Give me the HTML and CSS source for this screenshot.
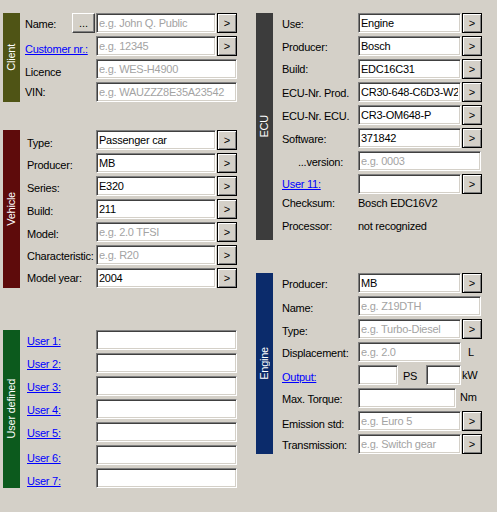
FILE: index.html
```html
<!DOCTYPE html>
<html>
<head>
<meta charset="utf-8">
<link rel="stylesheet" href="styles.css">
</head>
<body>
<div class="page">
  <div class="col col-left">
    <section class="group g-client">
      <div class="bar bar-client"><span>Client</span></div>
      <div class="fields">
        <div class="row">
          <span class="lbl lbl-short t5">Name:</span>
          <button class="dots">...</button>
          <input class="txt w120" placeholder="e.g. John Q. Public">
          <button class="go">&gt;</button>
        </div>
        <div class="row">
          <a href="#" class="lbl lnk t7">Customer nr.:</a>
          <input class="txt w120" placeholder="e.g. 12345">
          <button class="go">&gt;</button>
        </div>
        <div class="row">
          <span class="lbl t7">Licence</span>
          <input class="txt w141" placeholder="e.g. WES-H4900">
        </div>
        <div class="row">
          <span class="lbl t4">VIN:</span>
          <input class="txt w141" placeholder="e.g. WAUZZZ8E35A23542">
        </div>
      </div>
    </section>

    <section class="group g-vehicle">
      <div class="bar bar-vehicle"><span>Vehicle</span></div>
      <div class="fields">
        <div class="row">
          <span class="lbl t7">Type:</span>
          <input class="txt w120" value="Passenger car">
          <button class="go">&gt;</button>
        </div>
        <div class="row">
          <span class="lbl t6">Producer:</span>
          <input class="txt w120" value="MB">
          <button class="go">&gt;</button>
        </div>
        <div class="row">
          <span class="lbl t6">Series:</span>
          <input class="txt w120" value="E320">
          <button class="go">&gt;</button>
        </div>
        <div class="row">
          <span class="lbl t6">Build:</span>
          <input class="txt w120" value="211">
          <button class="go">&gt;</button>
        </div>
        <div class="row">
          <span class="lbl t6">Model:</span>
          <input class="txt w120" placeholder="e.g. 2.0 TFSI">
          <button class="go">&gt;</button>
        </div>
        <div class="row">
          <span class="lbl t5">Characteristic:</span>
          <input class="txt w120" placeholder="e.g. R20">
          <button class="go">&gt;</button>
        </div>
        <div class="row">
          <span class="lbl t4">Model year:</span>
          <input class="txt w120" value="2004">
          <button class="go">&gt;</button>
        </div>
      </div>
    </section>

    <section class="group g-user">
      <div class="bar bar-user"><span>User defined</span></div>
      <div class="fields">
        <div class="row"><a href="#" class="lbl lnk t5">User 1:</a><input class="txt w141"></div>
        <div class="row"><a href="#" class="lbl lnk t5">User 2:</a><input class="txt w141"></div>
        <div class="row"><a href="#" class="lbl lnk t5">User 3:</a><input class="txt w141"></div>
        <div class="row"><a href="#" class="lbl lnk t5">User 4:</a><input class="txt w141"></div>
        <div class="row"><a href="#" class="lbl lnk t5">User 5:</a><input class="txt w141"></div>
        <div class="row"><a href="#" class="lbl lnk t7">User 6:</a><input class="txt w141"></div>
        <div class="row"><a href="#" class="lbl lnk t7">User 7:</a><input class="txt w141"></div>
      </div>
    </section>
  </div>

  <div class="col col-right">
    <section class="group g-ecu">
      <div class="bar bar-ecu"><span>ECU</span></div>
      <div class="fields">
        <div class="row">
          <span class="lbl t5">Use:</span>
          <input class="txt w103" value="Engine">
          <button class="go">&gt;</button>
        </div>
        <div class="row">
          <span class="lbl t5">Producer:</span>
          <input class="txt w103" value="Bosch">
          <button class="go">&gt;</button>
        </div>
        <div class="row">
          <span class="lbl t4">Build:</span>
          <input class="txt w103" value="EDC16C31">
          <button class="go">&gt;</button>
        </div>
        <div class="row">
          <span class="lbl t5">ECU-Nr. Prod.</span>
          <input class="txt w103" value="CR30-648-C6D3-W2">
          <button class="go">&gt;</button>
        </div>
        <div class="row">
          <span class="lbl t5">ECU-Nr. ECU.</span>
          <input class="txt w103" value="CR3-OM648-P">
          <button class="go">&gt;</button>
        </div>
        <div class="row">
          <span class="lbl t5">Software:</span>
          <input class="txt w103" value="371842">
          <button class="go">&gt;</button>
        </div>
        <div class="row">
          <span class="lbl lbl-indent t5">...version:</span>
          <input class="txt w123" placeholder="e.g. 0003">
        </div>
        <div class="row">
          <a href="#" class="lbl lnk t4">User 11:</a>
          <input class="txt w103">
          <button class="go">&gt;</button>
        </div>
        <div class="row info">
          <span class="lbl">Checksum:</span>
          <span class="val">Bosch EDC16V2</span>
        </div>
        <div class="row info">
          <span class="lbl">Processor:</span>
          <span class="val">not recognized</span>
        </div>
      </div>
    </section>

    <section class="group g-engine">
      <div class="bar bar-engine"><span>Engine</span></div>
      <div class="fields">
        <div class="row">
          <span class="lbl t5">Producer:</span>
          <input class="txt w103" value="MB">
          <button class="go">&gt;</button>
        </div>
        <div class="row">
          <span class="lbl t6">Name:</span>
          <input class="txt w123" placeholder="e.g. Z19DTH">
        </div>
        <div class="row">
          <span class="lbl t6">Type:</span>
          <input class="txt w103" placeholder="e.g. Turbo-Diesel">
          <button class="go">&gt;</button>
        </div>
        <div class="row">
          <span class="lbl t5">Displacement:</span>
          <input class="txt w103" placeholder="e.g. 2.0">
          <span class="unit u-l t4">L</span>
        </div>
        <div class="row">
          <a href="#" class="lbl lnk t6">Output:</a>
          <input class="txt w40">
          <span class="unit u-ps t5">PS</span>
          <input class="txt w35">
          <span class="unit u-kw t4">kW</span>
        </div>
        <div class="row">
          <span class="lbl t5">Max. Torque:</span>
          <input class="txt w98">
          <span class="unit u-nm t3">Nm</span>
        </div>
        <div class="row">
          <span class="lbl t7">Emission std:</span>
          <input class="txt w103" placeholder="e.g. Euro 5">
          <button class="go">&gt;</button>
        </div>
        <div class="row">
          <span class="lbl t5">Transmission:</span>
          <input class="txt w103" placeholder="e.g. Switch gear">
          <button class="go">&gt;</button>
        </div>
      </div>
    </section>
  </div>
</div>
</body>
</html>
```
FILE: styles.css
```css
* { box-sizing: border-box; }

body {
  margin: 0;
  background: #d4d0c8;
  font-family: "Liberation Sans", Arial, sans-serif;
  font-size: 11px;
  letter-spacing: -0.25px;
  color: #000;
}

.page {
  display: flex;
  gap: 19px;
  padding: 13px 0 0 3px;
}

.col {
  display: flex;
  flex-direction: column;
}
.col-left { width: 234px; }
.col-right { width: 226px; }

.group { display: flex; }
.g-vehicle { margin-top: 28px; }
.g-user { margin-top: 42px; }
.g-engine { margin-top: 33px; }

.bar {
  flex: 0 0 17px;
  display: flex;
  align-items: center;
  justify-content: center;
  color: #fff;
}
.bar span {
  writing-mode: vertical-rl;
  transform: rotate(180deg);
  line-height: 17px;
  white-space: nowrap;
}
.bar-client { background: #4f5415; }
.bar-vehicle { background: #5e0b0b; }
.bar-user { background: #0c5a1d; }
.bar-ecu { background: #3c3c3c; }
.bar-engine { background: #0b2b6b; }

.fields {
  display: flex;
  flex-direction: column;
  gap: 3px;
}

.row {
  display: flex;
  height: 20px;
}

.lbl {
  line-height: 13px;
  white-space: nowrap;
  padding-top: 5px;
}
.col-left .lbl { width: 76px; padding-left: 7px; }
.g-client .lbl { padding-left: 5px; }
.g-client .lbl-short { width: 52px; }
.col-right .lbl { width: 85px; padding-left: 9px; }
.col-right .lbl-indent { padding-left: 25px; }

.t3 { padding-top: 3px; }
.t4 { padding-top: 4px; }
.t5 { padding-top: 5px; }
.t6 { padding-top: 6px; }
.t7 { padding-top: 7px; }

.lnk {
  color: #0000ff;
  text-decoration: underline;
}

.txt {
  height: 20px;
  margin: 0;
  padding: 0 2px;
  border: 1px solid;
  border-color: #808080 #ffffff #ffffff #808080;
  box-shadow: inset 1px 1px 0 #404040, inset -1px -1px 0 #d4d0c8;
  background: #fff;
  color: #000;
  font: inherit;
  letter-spacing: inherit;
  outline: none;
}
.txt::placeholder { color: #a3a3a3; opacity: 1; }

.w35 { width: 35px; }
.w40 { width: 40px; }
.w98 { width: 98px; }
.w103 { width: 103px; }
.w120 { width: 120px; }
.w123 { width: 123px; }
.w141 { width: 141px; }

.go {
  width: 20px;
  height: 20px;
  margin: 0 0 0 1px;
  padding: 0;
  border: 1px solid #000;
  background: #d4d0c8;
  box-shadow: inset 1px 1px 0 #ffffff, inset -1px -1px 0 #808080;
  font: inherit;
  color: #000;
}

.dots {
  width: 23px;
  height: 20px;
  margin: 0 1px 0 0;
  padding: 0;
  border: 1px solid;
  border-color: #ffffff #404040 #404040 #ffffff;
  box-shadow: inset -1px -1px 0 #808080;
  background: #d4d0c8;
  font: inherit;
  color: #000;
}

.info { align-items: flex-start; }
.info .lbl { padding-top: 0; }
.val { line-height: 13px; white-space: nowrap; }

.unit { line-height: 13px; white-space: nowrap; }
.u-l { margin-left: 7px; }
.u-ps { margin-left: 5px; width: 23px; }
.u-kw { margin-left: 1px; }
.u-nm { margin-left: 4px; }
```
